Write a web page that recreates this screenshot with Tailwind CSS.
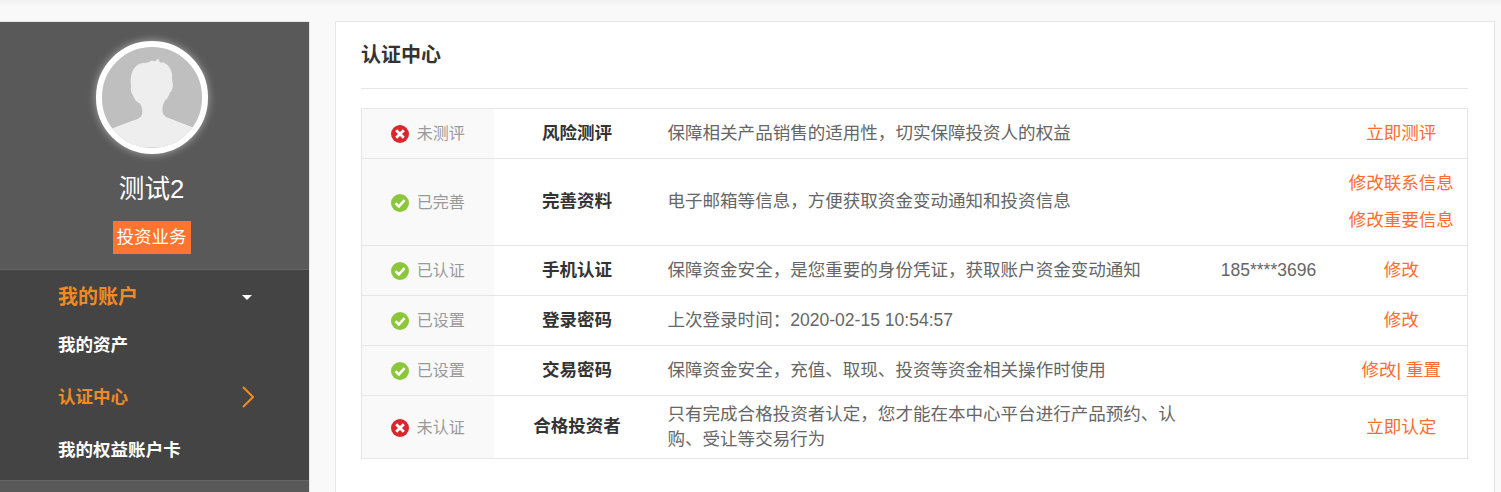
<!DOCTYPE html>
<html lang="zh-CN">
<head>
<meta charset="UTF-8">
<title>认证中心</title>
<script src="https://cdn.jsdelivr.net/npm/@tailwindcss/browser@4"></script>
</head>
<body class="bg-[#f9f9f9] font-['Liberation_Sans','Noto_Sans_CJK_SC',sans-serif]">
<div class="h-[492px] overflow-hidden">
  <div class="h-[6px] bg-linear-to-b from-[#f1f1f1] to-[#f9f9f9]"></div>
  <div class="flex items-start pt-[15px]">

    <!-- sidebar -->
    <aside class="w-[310px] h-[480px] shrink-0 bg-[#595959] border-t border-r border-[#e6e6e6] text-white">
      <div class="h-[247px] pt-[19px] pr-[6px] flex flex-col items-center">
        <div class="w-[112px] h-[113px] rounded-full border-[6px] border-white bg-[#bfbfbf] overflow-hidden shadow-[0_0_8px_rgba(255,255,255,0.5)]">
          <svg viewBox="0 0 100 100" class="w-full h-full">
            <path fill="#eeeeee" d="M38 16 L46 15 L50 13 L53 14 L56 11 L58 15 L62 15 L66 18 Q71 24 70 31 L71 38 Q70 44 68 45 Q66 51 63 53 Q59 60 61 66 Q63 70 68 71 L91 80 L100 85 L100 100 L0 100 L0 84 L10 81 L31 73 Q39 71 40 67 Q41 61 38 56 Q33 54 31 48 Q28 44 29 38 Q28 30 30 25 Q32 19 38 16 Z"/>
          </svg>
        </div>
        <div class="mt-[17px] text-[25.6px] leading-[36px]">测试2</div>
        <div class="mt-[14px] w-[78px] h-[33px] bg-[#ff7430] text-[17.55px] leading-[33px] text-center">投资业务</div>
      </div>
      <nav class="h-[212px] bg-[#444444] border-t border-b border-[#666666] pl-[58px] pr-[55px] font-bold">
        <div class="h-[52px] pt-[2px] flex items-center justify-between text-[20px] text-[#f08a24]">
          <span>我的账户</span>
          <span class="w-0 h-0 mr-[2px] border-x-[5px] border-x-transparent border-t-[5px] border-t-white"></span>
        </div>
        <div class="h-[49px] pb-[2px] flex items-center text-[17.55px]">我的资产</div>
        <div class="h-[54px] pb-[2px] flex items-center justify-between text-[17.55px] text-[#f08a24]">
          <span>认证中心</span>
          <svg width="12" height="22" viewBox="0 0 12 22" fill="none" stroke="#f08a24" stroke-width="2"><path d="M1 1 L11 11 L1 21"/></svg>
        </div>
        <div class="h-[52px] pb-[2px] flex items-center text-[17.55px]">我的权益账户卡</div>
      </nav>
    </aside>

    <!-- main card -->
    <main class="ml-[25px] w-[1160px] h-[480px] shrink-0 bg-white border border-[#e6e6e6] pl-[25px] pr-[26px]">
      <h2 class="h-[67px] pt-[18px] text-[20px] leading-[30px] font-bold text-[#333333] border-b border-[#e6e6e6]">认证中心</h2>
      <table class="mt-[19px] w-[1106px] table-fixed border-collapse border border-[#e6e6e6] text-[17.55px] text-[#666666]">
        <colgroup>
          <col class="w-[132px]"><col class="w-[167px]"><col class="w-[541px]"><col class="w-[134px]"><col class="w-[132px]">
        </colgroup>
        <tbody>
          <tr class="h-[50px] border-b border-[#e6e6e6]">
            <td class="bg-[#f9f9f9]">
              <div class="flex items-center justify-center gap-2 text-[16px] text-[#999999]">
                <svg width="18" height="18" viewBox="0 0 18 18"><circle cx="9" cy="9" r="9" fill="#d9272e"/><path d="M5.2 5.2 L12.8 12.8 M12.8 5.2 L5.2 12.8" stroke="#fff" stroke-width="2.8"/></svg>
                <span>未测评</span>
              </div>
            </td>
            <td class="text-center font-bold text-[#333333]">风险测评</td>
            <td class="pl-[7px] pr-[20px]">保障相关产品销售的适用性，切实保障投资人的权益</td>
            <td class="text-center"></td>
            <td class="text-center text-[#ff6c2f]">立即测评</td>
          </tr>
          <tr class="h-[87px] border-b border-[#e6e6e6]">
            <td class="bg-[#f9f9f9] pt-[2px]">
              <div class="flex items-center justify-center gap-2 text-[16px] text-[#999999]">
                <svg width="18" height="18" viewBox="0 0 18 18"><circle cx="9" cy="9" r="9" fill="#8cc63a"/><path d="M4.5 9.2 L7.9 12.4 L13.6 6.2" fill="none" stroke="#fff" stroke-width="2.6"/></svg>
                <span>已完善</span>
              </div>
            </td>
            <td class="text-center font-bold text-[#333333] pb-[2px]">完善资料</td>
            <td class="pl-[7px] pr-[20px] pb-[2px]">电子邮箱等信息，方便获取资金变动通知和投资信息</td>
            <td class="text-center"></td>
            <td class="text-center text-[#ff6c2f] leading-[37px]">修改联系信息<br>修改重要信息</td>
          </tr>
          <tr class="h-[50px] border-b border-[#e6e6e6]">
            <td class="bg-[#f9f9f9]">
              <div class="flex items-center justify-center gap-2 text-[16px] text-[#999999]">
                <svg width="18" height="18" viewBox="0 0 18 18"><circle cx="9" cy="9" r="9" fill="#8cc63a"/><path d="M4.5 9.2 L7.9 12.4 L13.6 6.2" fill="none" stroke="#fff" stroke-width="2.6"/></svg>
                <span>已认证</span>
              </div>
            </td>
            <td class="text-center font-bold text-[#333333]">手机认证</td>
            <td class="pl-[7px] pr-[20px]">保障资金安全，是您重要的身份凭证，获取账户资金变动通知</td>
            <td class="text-center">185****3696</td>
            <td class="text-center text-[#ff6c2f]">修改</td>
          </tr>
          <tr class="h-[50px] border-b border-[#e6e6e6]">
            <td class="bg-[#f9f9f9]">
              <div class="flex items-center justify-center gap-2 text-[16px] text-[#999999]">
                <svg width="18" height="18" viewBox="0 0 18 18"><circle cx="9" cy="9" r="9" fill="#8cc63a"/><path d="M4.5 9.2 L7.9 12.4 L13.6 6.2" fill="none" stroke="#fff" stroke-width="2.6"/></svg>
                <span>已设置</span>
              </div>
            </td>
            <td class="text-center font-bold text-[#333333]">登录密码</td>
            <td class="pl-[7px] pr-[20px]">上次登录时间：2020-02-15 10:54:57</td>
            <td class="text-center"></td>
            <td class="text-center text-[#ff6c2f]">修改</td>
          </tr>
          <tr class="h-[50px] border-b border-[#e6e6e6]">
            <td class="bg-[#f9f9f9]">
              <div class="flex items-center justify-center gap-2 text-[16px] text-[#999999]">
                <svg width="18" height="18" viewBox="0 0 18 18"><circle cx="9" cy="9" r="9" fill="#8cc63a"/><path d="M4.5 9.2 L7.9 12.4 L13.6 6.2" fill="none" stroke="#fff" stroke-width="2.6"/></svg>
                <span>已设置</span>
              </div>
            </td>
            <td class="text-center font-bold text-[#333333]">交易密码</td>
            <td class="pl-[7px] pr-[20px]">保障资金安全，充值、取现、投资等资金相关操作时使用</td>
            <td class="text-center"></td>
            <td class="text-center text-[#ff6c2f]">修改| 重置</td>
          </tr>
          <tr class="h-[63px]">
            <td class="bg-[#f9f9f9] pt-[2px]">
              <div class="flex items-center justify-center gap-2 text-[16px] text-[#999999]">
                <svg width="18" height="18" viewBox="0 0 18 18"><circle cx="9" cy="9" r="9" fill="#d9272e"/><path d="M5.2 5.2 L12.8 12.8 M12.8 5.2 L5.2 12.8" stroke="#fff" stroke-width="2.8"/></svg>
                <span>未认证</span>
              </div>
            </td>
            <td class="text-center font-bold text-[#333333] pb-[2px]">合格投资者</td>
            <td class="pl-[7px] pr-[20px] leading-[25px]">只有完成合格投资者认定，您才能在本中心平台进行产品预约、认购、受让等交易行为</td>
            <td class="text-center"></td>
            <td class="text-center text-[#ff6c2f]">立即认定</td>
          </tr>
        </tbody>
      </table>
    </main>
  </div>
</div>
</body>
</html>
